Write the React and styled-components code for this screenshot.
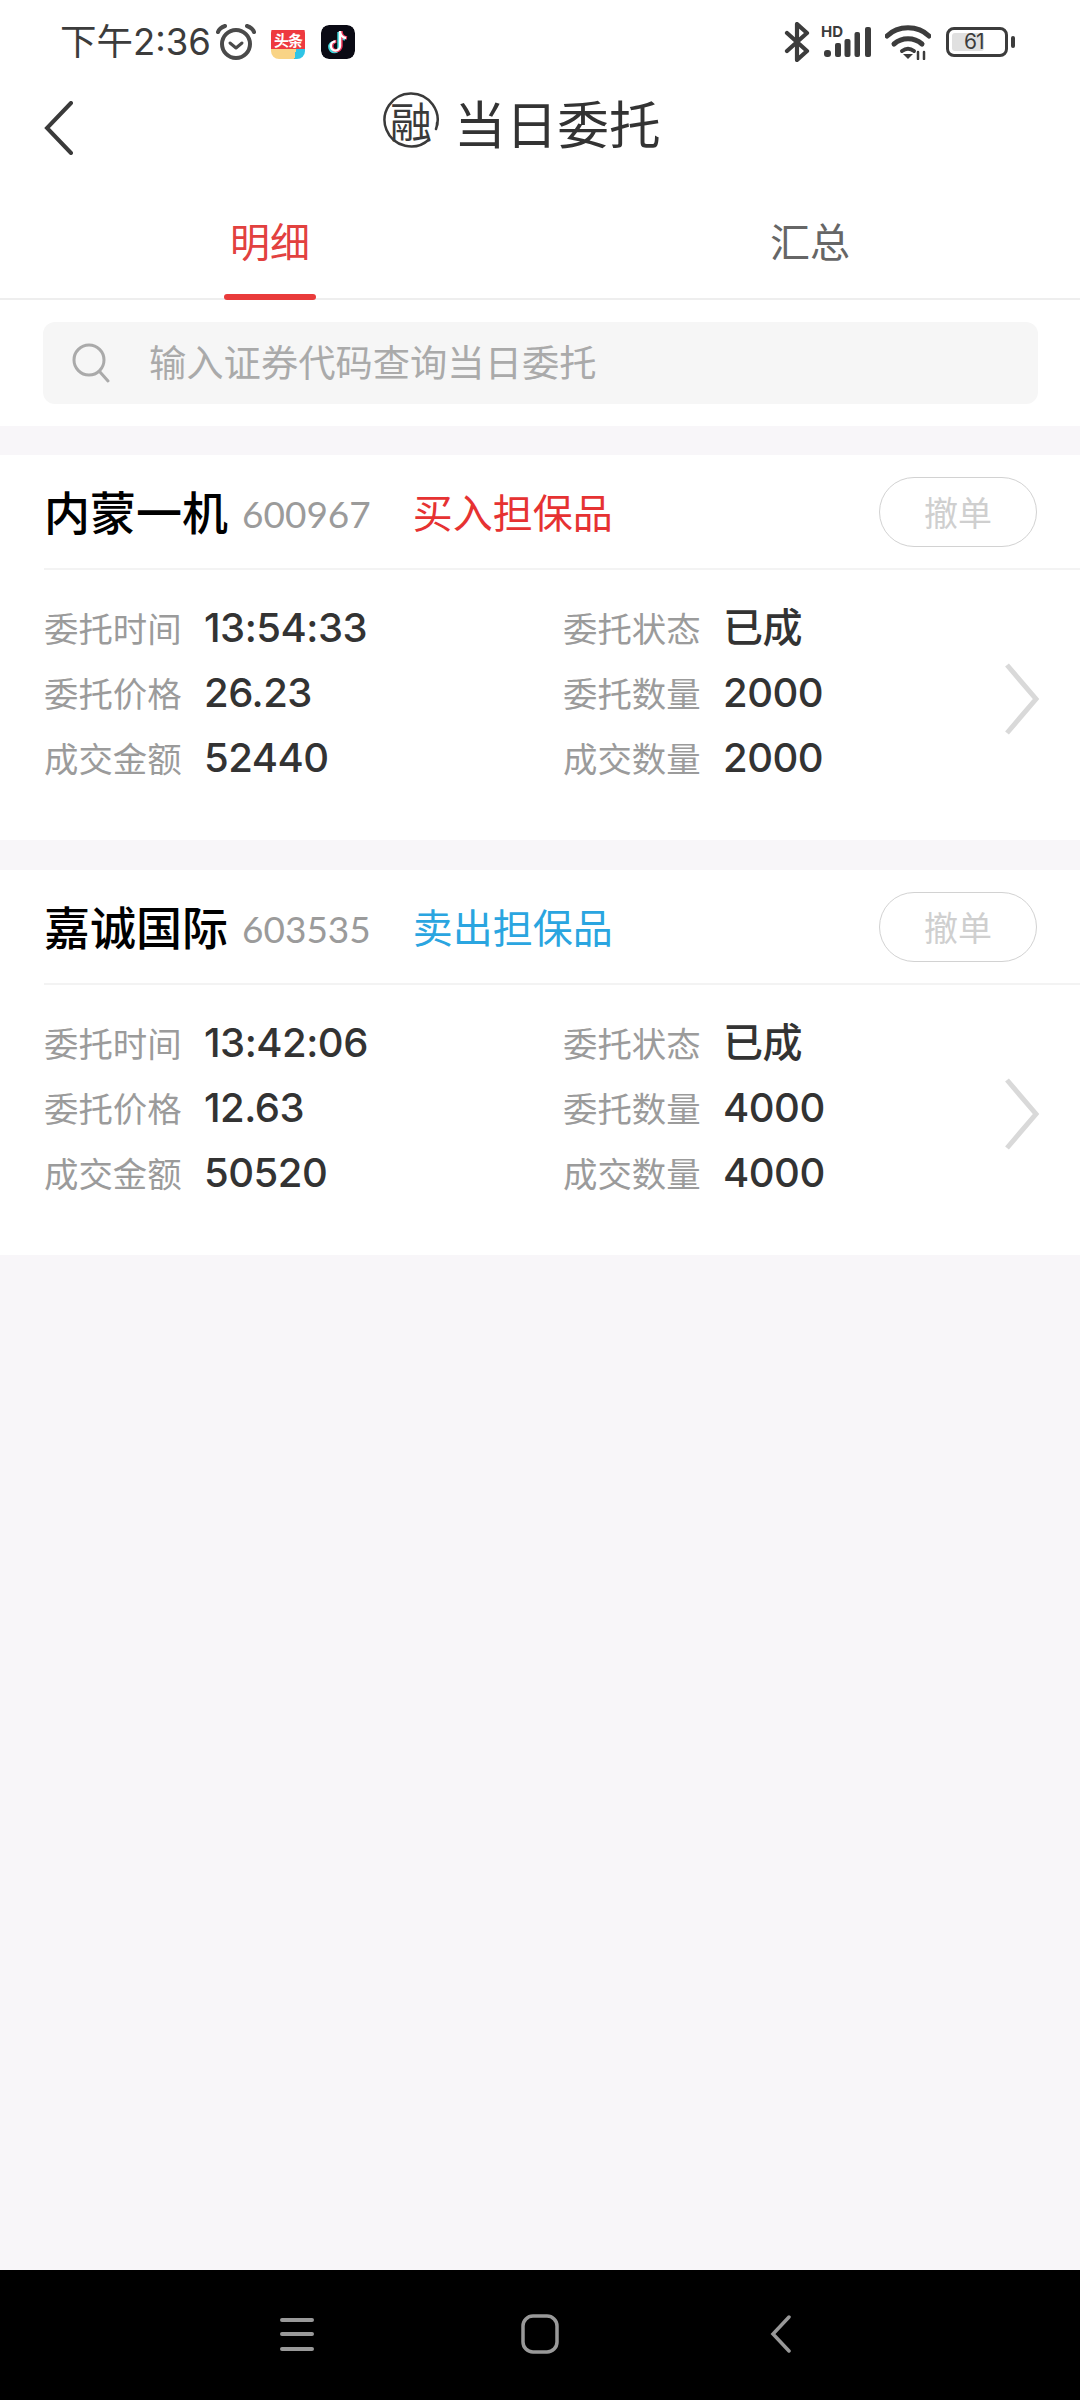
import React from 'react'
import styled, { createGlobalStyle } from 'styled-components'

const CJK = '"Noto Sans CJK SC", "Noto Sans", sans-serif'
const LATIN = 'Inter, "Noto Sans CJK SC", sans-serif'

const Global = createGlobalStyle`
    html, body {
        margin: 0;
        padding: 0;
        background: #f8f6f9;
        font-family: ${CJK};
    }
    * {
        box-sizing: border-box;
    }
`

const Page = styled.div`
    width: 1080px;
    height: 2400px;
    display: flex;
    flex-direction: column;
    background: #f8f6f9;
    overflow: hidden;
`

const Top = styled.div`
    background: #fff;
`

const StatusBar = styled.div`
    height: 82px;
    padding: 2px 66px 0 60px;
    display: flex;
    align-items: center;
    justify-content: space-between;
    color: #3c3c3c;
`

const StatusLeft = styled.div`
    display: flex;
    align-items: center;
`

const StatusRight = styled.div`
    display: flex;
    align-items: center;
`

const StatusIcon = styled.svg`
    margin-right: ${p => p.$gap}px;
    flex: none;
`

const Clock = styled.span`
    font-family: ${LATIN};
    font-size: 36.5px;
    line-height: 1;
    margin-right: 5px;
`

const AppIcon = styled.div`
    width: 34px;
    height: 34px;
    border-radius: 8px;
    margin-left: ${p => p.$gap}px;
    overflow: hidden;
    flex: none;
`

const ToutiaoTop = styled.div`
    height: 19px;
    margin-top: 5px;
    background: #ee3a3f;
    color: #fff;
    font-size: 15px;
    font-weight: 700;
    line-height: 19px;
    text-align: center;
    letter-spacing: -1px;
`

const ToutiaoBottom = styled.div`
    height: 10px;
    background: linear-gradient(100deg, #f9d486 70%, #2fc4e6 70%);
`

const NavBar = styled.div`
    height: 86px;
    padding-left: 44px;
    display: flex;
    align-items: center;
`

const BackButton = styled.div`
    width: 32px;
    margin-top: 6px;
    display: flex;
`

const Title = styled.div`
    margin-left: 307px;
    display: flex;
    align-items: center;
`

const Seal = styled.div`
    position: relative;
    width: 56px;
    height: 56px;
    margin-top: -10px;
    display: flex;
    align-items: center;
    justify-content: center;
    font-size: 42px;
    line-height: 1;
    color: #3a3a3a;
`

const SealRing = styled.svg`
    position: absolute;
    inset: 0;
`

const TitleText = styled.div`
    margin-left: 15px;
    margin-top: -6px;
    font-size: 51.7px;
    line-height: 1;
    color: #333;
`

const Tabs = styled.div`
    height: 132px;
    display: flex;
    border-bottom: 2px solid #eeeeee;
`

const Tab = styled.div`
    position: relative;
    flex: 1;
    display: flex;
    justify-content: center;
    padding-top: 43px;
    font-size: 40px;
    line-height: 58px;
    color: ${p => (p.$active ? '#e2413f' : '#666')};
    &::after {
        content: '';
        display: ${p => (p.$active ? 'block' : 'none')};
        position: absolute;
        left: 224px;
        bottom: -2px;
        width: 92px;
        height: 6px;
        border-radius: 3px;
        background: #e93b3b;
    }
`

const SearchWrap = styled.div`
    padding: 22px 42px 22px 43px;
`

const SearchBox = styled.div`
    height: 82px;
    padding-left: 28px;
    border-radius: 12px;
    background: #f6f6f6;
    display: flex;
    align-items: center;
`

const SearchText = styled.div`
    margin-left: 38px;
    margin-top: -3px;
    font-size: 37.3px;
    line-height: 1;
    color: #aaa;
`

const Cards = styled.div`
    margin-top: 29px;
    display: flex;
    flex-direction: column;
    gap: 30px;
`

const Card = styled.div`
    height: 385px;
    background: #fff;
    padding-left: 44px;
`

const CardHead = styled.div`
    height: 115px;
    padding-right: 43px;
    display: flex;
    align-items: center;
    border-bottom: 2px solid #f3f3f3;
`

const StockName = styled.div`
    font-size: 46px;
    font-weight: 500;
    line-height: 1;
    margin-top: -3px;
    color: #000;
`

const StockCode = styled.div`
    margin-left: 14px;
    font-family: Lato, sans-serif;
    font-size: 37px;
    line-height: 1;
    padding-top: 4px;
    color: #9b9b9b;
`

const Side = styled.div`
    margin-left: 42px;
    margin-top: -2px;
    font-size: 40px;
    line-height: 1;
    color: ${p => p.$color};
`

const CancelButton = styled.div`
    margin-left: auto;
    width: 158px;
    height: 70px;
    border: 1.5px solid #d2d2d2;
    border-radius: 35px;
    display: flex;
    align-items: center;
    justify-content: center;
    font-size: 34px;
    color: #cfcfcf;
`

const CardBody = styled.div`
    position: relative;
    padding-top: 25px;
    display: grid;
    grid-template-columns: 519px 1fr;
    grid-auto-rows: 65px;
`

const Field = styled.div`
    display: flex;
    align-items: center;
`

const Label = styled.span`
    width: 160px;
    font-size: 34.4px;
    line-height: 1;
    white-space: nowrap;
    color: #9b9b9b;
`

const Value = styled.span`
    font-family: ${LATIN};
    font-size: 40px;
    font-weight: 500;
    line-height: 1;
    color: #333;
    letter-spacing: -0.5px;
`

const Chevron = styled.svg`
    position: absolute;
    right: 40px;
    top: 93px;
`

const BottomBar = styled.div`
    margin-top: auto;
    height: 130px;
    background: #000;
    display: flex;
    align-items: center;
    padding: 0 0 0 278px;
`

const BottomIcon = styled.svg`
    margin-right: ${p => p.$gap}px;
    margin-top: -2px;
    flex: none;
`

const Battery = styled.div`
    position: relative;
    width: 62px;
    height: 30px;
    border: 3px solid #3c3c3c;
    border-radius: 8px;
    margin-right: 6px;
    &::before {
        content: '';
        position: absolute;
        left: 3px;
        top: 3px;
        bottom: 3px;
        width: 32px;
        border-radius: 3px;
        background: #e0e0e0;
    }
    &::after {
        content: '';
        position: absolute;
        right: -10px;
        top: 6px;
        width: 4px;
        height: 12px;
        border-radius: 2px;
        background: #3c3c3c;
    }
`

const BatteryText = styled.div`
    position: absolute;
    left: 15px;
    top: 1px;
    font-family: ${LATIN};
    font-size: 21px;
    line-height: 22px;
    letter-spacing: -1px;
    color: #3c3c3c;
`

function BluetoothIcon () {
    return (
        <StatusIcon $gap={11} width='26' height='40' viewBox='0 0 26 40' fill='none' stroke='#3c3c3c' strokeWidth='4.2' strokeLinejoin='round' strokeLinecap='round'>
            <path d='M3 11l20 18-10 9V2l10 9L3 29' />
        </StatusIcon>
    )
}

function SignalIcon () {
    return (
        <StatusIcon $gap={14} width='50' height='44' viewBox='0 -6 50 44'>
            <text x='0' y='11' fontFamily='Inter, sans-serif' fontSize='15' fontWeight='700' fill='#3c3c3c'>HD</text>
            <g fill='#3c3c3c'>
                <rect x='3' y='24' width='7' height='7' rx='3' />
                <rect x='14' y='17' width='6' height='14' rx='2' />
                <rect x='23.5' y='13' width='6' height='18' rx='2' />
                <rect x='33.5' y='6' width='5.5' height='25' rx='2' />
                <rect x='44' y='1' width='6' height='30' rx='2' />
            </g>
        </StatusIcon>
    )
}

function WifiIcon () {
    return (
        <StatusIcon $gap={15} width='46' height='36' viewBox='0 0 46 36' fill='none' stroke='#3c3c3c' strokeWidth='5' strokeLinecap='round'>
            <path d='M2 12C13 1 33 1 44 12' />
            <path d='M9 20c8-7 20-7 28 0' />
            <path d='M17 27c4-3 8-3 12 0' strokeWidth='4' />
            <path d='M23 35l-5-5h10z' fill='#3c3c3c' stroke='none' />
            <path d='M33 28v7M39 28v7' strokeWidth='2.5' />
        </StatusIcon>
    )
}

function AlarmIcon () {
    return (
        <svg width='40' height='38' viewBox='0 0 40 38' fill='none' stroke='#4a4a4a' strokeWidth='4' strokeLinecap='round'>
            <circle cx='20' cy='21' r='14' />
            <path d='M14 20l6 5 6-5' strokeWidth='3' strokeLinejoin='round' />
            <path d='M2 9c1-3 4-5 7-6M38 9c-1-3-4-5-7-6' />
        </svg>
    )
}

function TiktokIcon () {
    return (
        <svg width='34' height='34' viewBox='0 0 34 34'>
            <rect width='34' height='34' rx='8' fill='#0a0a14' />
            <path d='M19 6v15a4.6 4.6 0 1 1-4.6-4.6M19 6c0 4 3 6.6 6 7' fill='none' stroke='#3fd7de' strokeWidth='3.4' transform='translate(-1 1)' />
            <path d='M19 6v15a4.6 4.6 0 1 1-4.6-4.6M19 6c0 4 3 6.6 6 7' fill='none' stroke='#f0365a' strokeWidth='3.4' transform='translate(1 0)' />
            <path d='M19 6v15a4.6 4.6 0 1 1-4.6-4.6M19 6c0 4 3 6.6 6 7' fill='none' stroke='#fff' strokeWidth='2.4' />
        </svg>
    )
}

const orders = [
    {
        name: '内蒙一机',
        code: '600967',
        side: '买入担保品',
        sideColor: '#e63232',
        time: '13:54:33',
        price: '26.23',
        amount: '52440',
        qty: '2000',
        dealQty: '2000'
    },
    {
        name: '嘉诚国际',
        code: '603535',
        side: '卖出担保品',
        sideColor: '#2aa5e0',
        time: '13:42:06',
        price: '12.63',
        amount: '50520',
        qty: '4000',
        dealQty: '4000'
    }
]

function OrderCard ({ order }) {
    const fields = [
        ['委托时间', order.time],
        ['委托状态', '已成'],
        ['委托价格', order.price],
        ['委托数量', order.qty],
        ['成交金额', order.amount],
        ['成交数量', order.dealQty]
    ]
    return (
        <Card>
            <CardHead>
                <StockName>{order.name}</StockName>
                <StockCode>{order.code}</StockCode>
                <Side $color={order.sideColor}>{order.side}</Side>
                <CancelButton>撤单</CancelButton>
            </CardHead>
            <CardBody>
                {fields.map(([label, value]) => (
                    <Field key={label}>
                        <Label>{label}</Label>
                        <Value>{value}</Value>
                    </Field>
                ))}
                <Chevron width='36' height='72' viewBox='0 0 36 72' fill='none' stroke='#d9d9d9' strokeWidth='5'>
                    <path d='M3 2l29 34L3 70' />
                </Chevron>
            </CardBody>
        </Card>
    )
}

export default function App () {
    return (
        <Page>
            <Global />
            <Top>
                <StatusBar>
                    <StatusLeft>
                        <Clock>下午2:36</Clock>
                        <AlarmIcon />
                        <AppIcon $gap={15}>
                            <ToutiaoTop>头条</ToutiaoTop>
                            <ToutiaoBottom />
                        </AppIcon>
                        <AppIcon $gap={16}>
                            <TiktokIcon />
                        </AppIcon>
                    </StatusLeft>
                    <StatusRight>
                        <BluetoothIcon />
                        <SignalIcon />
                        <WifiIcon />
                        <Battery>
                            <BatteryText>61</BatteryText>
                        </Battery>
                    </StatusRight>
                </StatusBar>
                <NavBar>
                    <BackButton>
                        <svg width='30' height='54' viewBox='0 0 30 54' fill='none' stroke='#3a3a3a' strokeWidth='4' strokeLinecap='round'>
                            <path d='M27 2L3 27l24 25' />
                        </svg>
                    </BackButton>
                    <Title>
                        <Seal>
                            <SealRing width='56' height='56' viewBox='0 0 56 56' fill='none' stroke='#3a3a3a' strokeWidth='2.5' strokeLinecap='round'>
                                <path d='M53 37A26.5 26.5 0 1 0 46 47.5' />
                                <path d='M54 31v2' />
                            </SealRing>
                            融
                        </Seal>
                        <TitleText>当日委托</TitleText>
                    </Title>
                </NavBar>
                <Tabs>
                    <Tab $active>明细</Tab>
                    <Tab>汇总</Tab>
                </Tabs>
                <SearchWrap>
                    <SearchBox>
                        <svg width='40' height='40' viewBox='0 0 40 40' fill='none' stroke='#aaa' strokeWidth='3' strokeLinecap='round'>
                            <circle cx='18' cy='17' r='15' />
                            <path d='M29 29l8 9' />
                        </svg>
                        <SearchText>输入证券代码查询当日委托</SearchText>
                    </SearchBox>
                </SearchWrap>
            </Top>
            <Cards>
                {orders.map(o => <OrderCard key={o.code} order={o} />)}
            </Cards>
            <BottomBar>
                <BottomIcon $gap={205} width='38' height='36' viewBox='0 0 38 36' fill='none' stroke='#999' strokeWidth='4' strokeLinecap='round'>
                    <path d='M4 4h30M4 18h30M4 33h30' />
                </BottomIcon>
                <BottomIcon $gap={211} width='38' height='40' viewBox='0 0 38 40' fill='none' stroke='#999' strokeWidth='3.5'>
                    <rect x='2' y='2' width='34' height='36' rx='10' />
                </BottomIcon>
                <BottomIcon $gap={0} width='22' height='38' viewBox='0 0 22 38' fill='none' stroke='#999' strokeWidth='3.5' strokeLinecap='round'>
                    <path d='M19 2L3 19l16 17' />
                </BottomIcon>
            </BottomBar>
        </Page>
    )
}
